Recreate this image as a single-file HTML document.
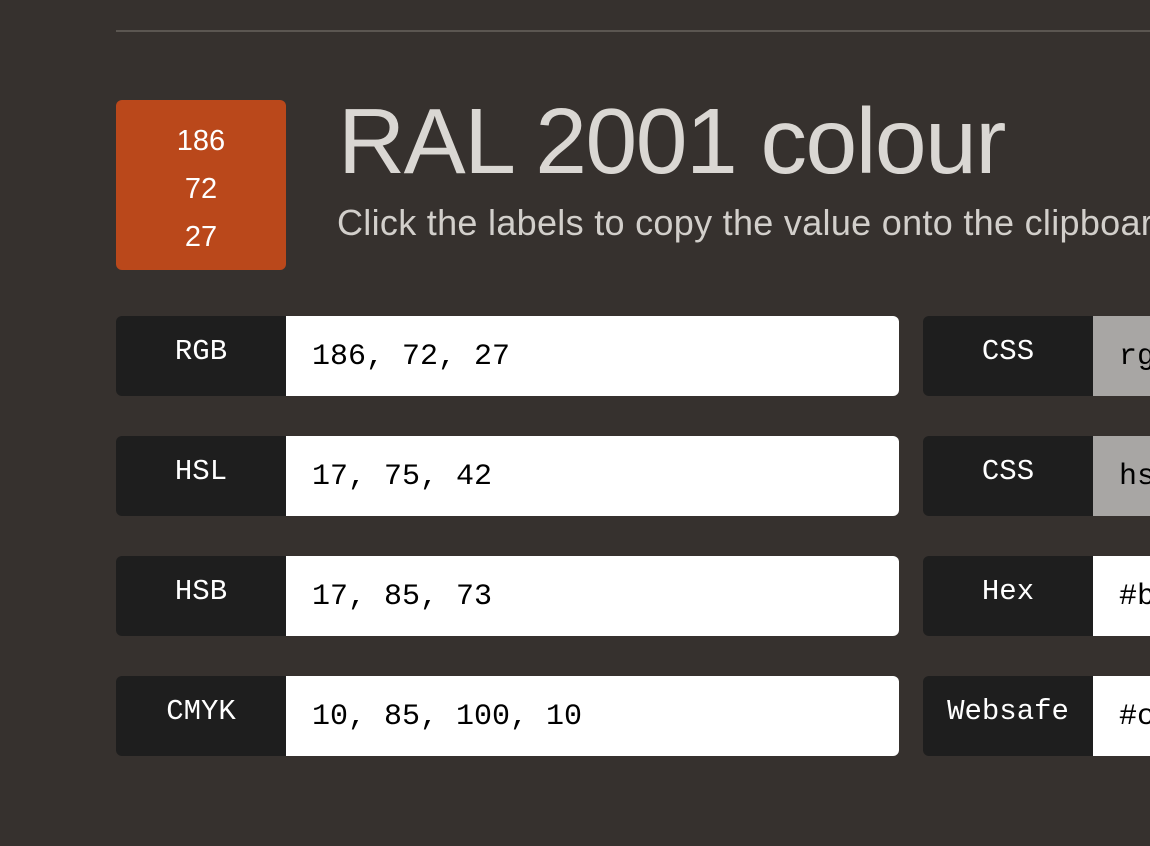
<!DOCTYPE html>
<html><head><meta charset="utf-8"><style>
html,body{margin:0;padding:0;width:1150px;height:846px;overflow:hidden;background:#36312e;}
body{position:relative;font-family:"Liberation Sans",sans-serif;}
.line{position:absolute;left:116px;top:30px;width:1034px;height:2px;background:#5b5651;}
.sw{position:absolute;left:116px;top:100px;width:170px;height:170px;background:#ba481b;border-radius:6px;color:#fff;font-size:29px;text-align:center;line-height:48px;padding-top:17px;box-sizing:border-box;}
h1{position:absolute;left:338px;top:86px;margin:0;font-weight:normal;font-size:93px;color:#dad7d3;letter-spacing:-1.5px;white-space:nowrap;line-height:110px;}
.sub{position:absolute;left:337px;top:201px;font-size:36px;color:#d2cfcb;white-space:nowrap;line-height:44px;letter-spacing:0.3px;}
.row{position:absolute;height:80px;display:flex;}
.lab{width:170px;background:#1e1e1e;color:#fff;border-radius:6px 0 0 6px;text-align:center;font-family:"Liberation Mono",monospace;font-size:29px;line-height:72px;}
.val{background:#fff;color:#000;font-family:"Liberation Mono",monospace;font-size:30px;line-height:82px;padding-left:26px;box-sizing:border-box;border-radius:0 6px 6px 0;white-space:nowrap;overflow:hidden;}
.g{background:#a8a6a4;}
</style></head><body>
<div class="line"></div>
<div class="sw">186<br>72<br>27</div>
<h1>RAL 2001 colour</h1>
<div class="sub">Click the labels to copy the value onto the clipboard</div>

<div class="row" style="left:116px;top:316px"><div class="lab">RGB</div><div class="val" style="width:613px">186, 72, 27</div></div>
<div class="row" style="left:116px;top:436px"><div class="lab">HSL</div><div class="val" style="width:613px">17, 75, 42</div></div>
<div class="row" style="left:116px;top:556px"><div class="lab">HSB</div><div class="val" style="width:613px">17, 85, 73</div></div>
<div class="row" style="left:116px;top:676px"><div class="lab">CMYK</div><div class="val" style="width:613px">10, 85, 100, 10</div></div>

<div class="row" style="left:923px;top:316px"><div class="lab">CSS</div><div class="val g" style="width:227px">rgb(186, 72, 27)</div></div>
<div class="row" style="left:923px;top:436px"><div class="lab">CSS</div><div class="val g" style="width:227px">hsl(17, 75%, 42%)</div></div>
<div class="row" style="left:923px;top:556px"><div class="lab">Hex</div><div class="val" style="width:227px">#ba481b</div></div>
<div class="row" style="left:923px;top:676px"><div class="lab">Websafe</div><div class="val" style="width:227px">#cc3300</div></div>
</body></html>
